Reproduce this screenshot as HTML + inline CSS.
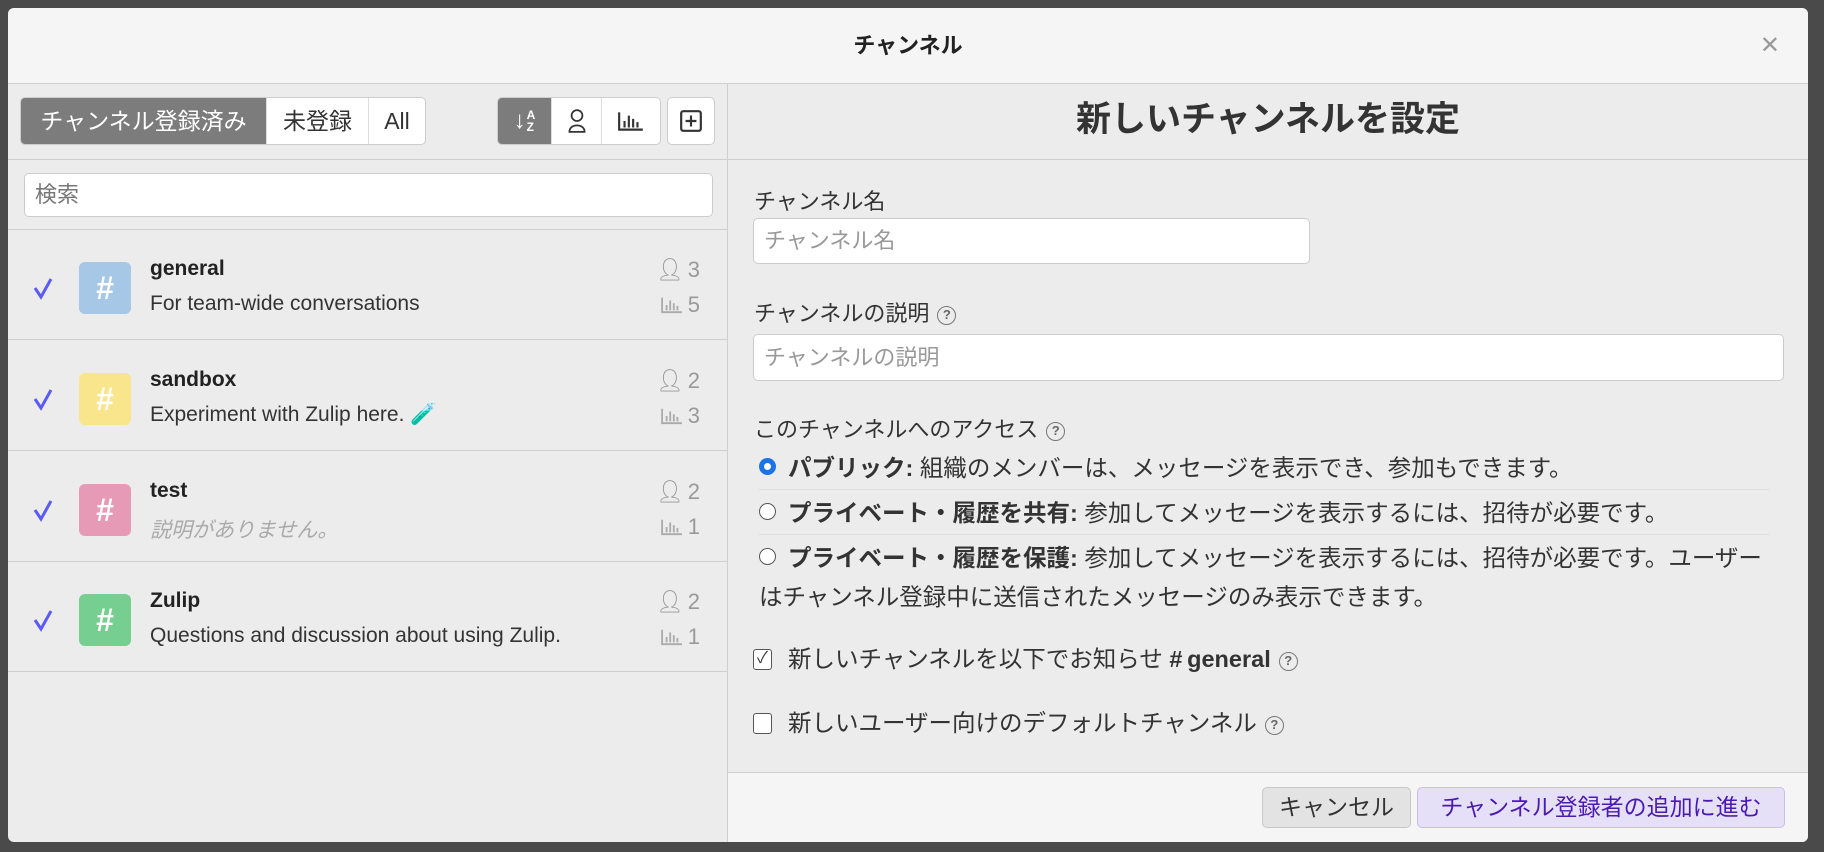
<!DOCTYPE html>
<html><head><meta charset="utf-8"><style>
*{box-sizing:border-box;margin:0;padding:0}
body{width:1824px;height:852px;background:#4a4a4a;font-family:"Liberation Sans","Noto Sans CJK JP",sans-serif;color:#333;position:relative;overflow:hidden;font-size:23px}
.modal{position:absolute;left:8px;top:8px;width:1800px;height:834px;background:#ececec;border-radius:6px;overflow:hidden}
.hdr{position:absolute;left:0;top:0;width:1800px;height:76px;background:#f5f5f5;border-bottom:1px solid #cfcfcf;text-align:center;line-height:76px;font-weight:bold;font-size:22px;color:#222}
.close{position:absolute;right:28px;top:0;line-height:76px;font-size:24px;color:#999;font-weight:normal}
.left{position:absolute;left:0;top:76px;width:720px;height:758px;border-right:1px solid #cfcfcf}
.right{position:absolute;left:720px;top:76px;width:1080px;height:758px}
.a{position:absolute}
.tabs{left:12px;top:13px;height:48px;display:flex;border:1px solid #ccc;border-radius:5px;overflow:hidden;background:#fff}
.tabs div{height:46px;line-height:46px;border-right:1px solid #ddd;font-size:23px}
.tabs .on{background:#7c7c7c;color:#fff;width:246px;text-align:center}
.sbtn{display:flex;border:1px solid #ccc;border-radius:5px;overflow:hidden;background:#fff;height:48px}
.sbtn div{height:46px;display:flex;align-items:center;justify-content:center;border-right:1px solid #ddd}
.row{position:absolute;left:0;width:720px;height:110px;border-bottom:1px solid #cfcfcf}
.chk{position:absolute;left:24px;top:46px}
.ic{position:absolute;left:71px;top:32px;width:52px;height:52px;border-radius:6px;color:#fff;font-size:32px;font-weight:bold;text-align:center;line-height:52px}
.nm{position:absolute;left:142px;top:27px;font-weight:bold;font-size:21px;color:#222}
.ds{position:absolute;left:142px;top:62px;font-size:21px;color:#333}
.cnt{position:absolute;right:28px;font-size:22px;color:#999;display:flex;align-items:center;gap:4px}
.inp{position:absolute;background:#fff;border:1px solid #ccc;border-radius:5px;color:#999;font-size:22px;padding-left:10px}
.lbl{position:absolute;left:26px;font-size:22px;color:#333}
.q{display:inline-block;width:19px;height:19px;border:1.5px solid #777;border-radius:50%;font-size:13px;line-height:16px;text-align:center;color:#666;vertical-align:2px;margin-left:8px;font-weight:bold}
.rad{position:absolute;left:31px;width:17px;height:17px;border-radius:50%;border:1.5px solid #555;background:#fff}
.rt{position:absolute;left:60px;font-size:23.5px;color:#333;line-height:39px}
.cb{position:absolute;left:25px;width:19px;height:21px;border:1.5px solid #555;border-radius:3px;background:#fff;font-size:16px;line-height:18px;text-align:center}
.btn{position:absolute;height:41px;border-radius:5px;font-size:23px;line-height:39px;text-align:center}
</style></head><body>
<div class="modal">
<div class="hdr">チャンネル<span class="close">✕</span></div>
<div class="left">
 <div style="position:absolute;left:0;top:0;width:720px;height:76px;border-bottom:1px solid #cfcfcf"></div>
 <div class="a tabs"><div class="on">チャンネル登録済み</div><div style="width:102px;text-align:center">未登録</div><div style="border:none;width:56px;text-align:center">All</div></div>
 <div class="a sbtn" style="left:489px;top:13px;width:164px">
  <div style="width:54px;background:#7c7c7c;color:#fff;font-size:12px;font-weight:bold;line-height:12px"><span style="font-size:24px;margin-right:1px;font-weight:bold">↓</span><span>A<br>Z</span></div>
  <div style="width:50px"><svg width="20" height="26" viewBox="0 0 18 24"><circle cx="9" cy="7" r="5" fill="none" stroke="#333" stroke-width="1.6"/><path d="M2 22 C2 14 16 14 16 22 Z" fill="none" stroke="#333" stroke-width="1.6"/></svg></div>
  <div style="width:58px;border:none"><svg width="28" height="22" viewBox="0 0 26 20"><path d="M2 2V18H24M7 16V10M11 16V5M15 16V8M19 16V11" stroke="#333" stroke-width="2" fill="none"/></svg></div>
 </div>
 <div class="a sbtn" style="left:659px;top:13px;width:48px;justify-content:center;align-items:center"><svg width="24" height="24" viewBox="0 0 22 22"><rect x="2" y="2" width="18" height="18" rx="2" fill="none" stroke="#333" stroke-width="2"/><path d="M11 6V16M6 11H16" stroke="#333" stroke-width="2"/></svg></div>
 <div class="inp" style="left:16px;top:89px;width:689px;height:44px;line-height:42px;color:#777">検索</div>
 <div style="position:absolute;left:0;top:145px;width:720px;border-top:1px solid #cfcfcf"></div>
 <div class="row" style="top:146px"><svg class="chk" width="22" height="24" viewBox="0 0 22 24"><path d="M3 12L9 21L19 3" fill="none" stroke="#5b5bf5" stroke-width="3"/></svg><div class="ic" style="background:#a6c7e5">#</div><div class="nm">general</div><div class="ds">For team-wide conversations</div><div class="cnt" style="top:27px">👤︎<span>3</span></div><div class="cnt" style="top:62px"><svg width="24" height="18" viewBox="0 0 26 20"><path d="M2 2V18H24M7 16V10M11 16V5M15 16V8M19 16V11" stroke="#aaa" stroke-width="2" fill="none"/></svg><span>5</span></div></div>
 <div class="row" style="top:257px"><svg class="chk" width="22" height="24" viewBox="0 0 22 24"><path d="M3 12L9 21L19 3" fill="none" stroke="#5b5bf5" stroke-width="3"/></svg><div class="ic" style="background:#f9e58b">#</div><div class="nm">sandbox</div><div class="ds">Experiment with Zulip here. <span style="color:#6a6">🧪</span></div><div class="cnt" style="top:27px">👤︎<span>2</span></div><div class="cnt" style="top:62px"><svg width="24" height="18" viewBox="0 0 26 20"><path d="M2 2V18H24M7 16V10M11 16V5M15 16V8M19 16V11" stroke="#aaa" stroke-width="2" fill="none"/></svg><span>3</span></div></div>
 <div class="row" style="top:368px"><svg class="chk" width="22" height="24" viewBox="0 0 22 24"><path d="M3 12L9 21L19 3" fill="none" stroke="#5b5bf5" stroke-width="3"/></svg><div class="ic" style="background:#e79ab5">#</div><div class="nm">test</div><div class="ds" style="color:#aaa;font-style:italic">説明がありません。</div><div class="cnt" style="top:27px">👤︎<span>2</span></div><div class="cnt" style="top:62px"><svg width="24" height="18" viewBox="0 0 26 20"><path d="M2 2V18H24M7 16V10M11 16V5M15 16V8M19 16V11" stroke="#aaa" stroke-width="2" fill="none"/></svg><span>1</span></div></div>
 <div class="row" style="top:478px"><svg class="chk" width="22" height="24" viewBox="0 0 22 24"><path d="M3 12L9 21L19 3" fill="none" stroke="#5b5bf5" stroke-width="3"/></svg><div class="ic" style="background:#76ce90">#</div><div class="nm">Zulip</div><div class="ds">Questions and discussion about using Zulip.</div><div class="cnt" style="top:27px">👤︎<span>2</span></div><div class="cnt" style="top:62px"><svg width="24" height="18" viewBox="0 0 26 20"><path d="M2 2V18H24M7 16V10M11 16V5M15 16V8M19 16V11" stroke="#aaa" stroke-width="2" fill="none"/></svg><span>1</span></div></div>
</div>
<div class="right">
 <div style="position:absolute;left:0;top:0;width:1080px;height:76px;border-bottom:1px solid #cfcfcf;text-align:center;line-height:72px;font-size:35px;font-weight:bold;color:#333">新しいチャンネルを設定</div>
 <div class="lbl" style="top:100px">チャンネル名</div>
 <div class="inp" style="left:25px;top:134px;width:557px;height:46px;line-height:44px">チャンネル名</div>
 <div class="lbl" style="top:212px">チャンネルの説明<span class="q">?</span></div>
 <div class="inp" style="left:25px;top:250px;width:1031px;height:47px;line-height:45px">チャンネルの説明</div>
 <div class="lbl" style="top:328px">このチャンネルへのアクセス<span class="q">?</span></div>
 <div class="rad" style="top:374px;border:5px solid #1a73e8"></div>
 <div class="rt" style="top:365px"><b>パブリック:</b> 組織のメンバーは、メッセージを表示でき、参加もできます。</div>
 <div style="position:absolute;left:31px;top:405px;width:1010px;border-top:1px solid #ddd"></div>
 <div class="rad" style="top:419px"></div>
 <div class="rt" style="top:410px"><b>プライベート・履歴を共有:</b> 参加してメッセージを表示するには、招待が必要です。</div>
 <div style="position:absolute;left:31px;top:450px;width:1010px;border-top:1px solid #ddd"></div>
 <div class="rad" style="top:464px"></div>
 <div class="rt" style="top:455px;width:1010px;left:31px;text-indent:29px"><b>プライベート・履歴を保護:</b> 参加してメッセージを表示するには、招待が必要です。ユーザー<br>はチャンネル登録中に送信されたメッセージのみ表示できます。</div>
 <div class="cb" style="top:565px">✓</div>
 <div class="rt" style="top:556px">新しいチャンネルを以下でお知らせ <b>#&thinsp;general</b><span class="q">?</span></div>
 <div class="cb" style="top:629px"></div>
 <div class="rt" style="top:620px">新しいユーザー向けのデフォルトチャンネル<span class="q">?</span></div>
 <div style="position:absolute;left:0;top:688px;width:1080px;height:70px;background:#f5f5f5;border-top:1px solid #cfcfcf"></div>
</div>
<div class="btn" style="left:1254px;top:779px;width:149px;background:#e3e3e3;border:1px solid #c8c8c8;color:#333">キャンセル</div>
<div class="btn" style="left:1409px;top:779px;width:368px;background:#e5e0f7;border:1px solid #c9c0ea;color:#4b1ab0">チャンネル登録者の追加に進む</div>
</div>
</body></html>
